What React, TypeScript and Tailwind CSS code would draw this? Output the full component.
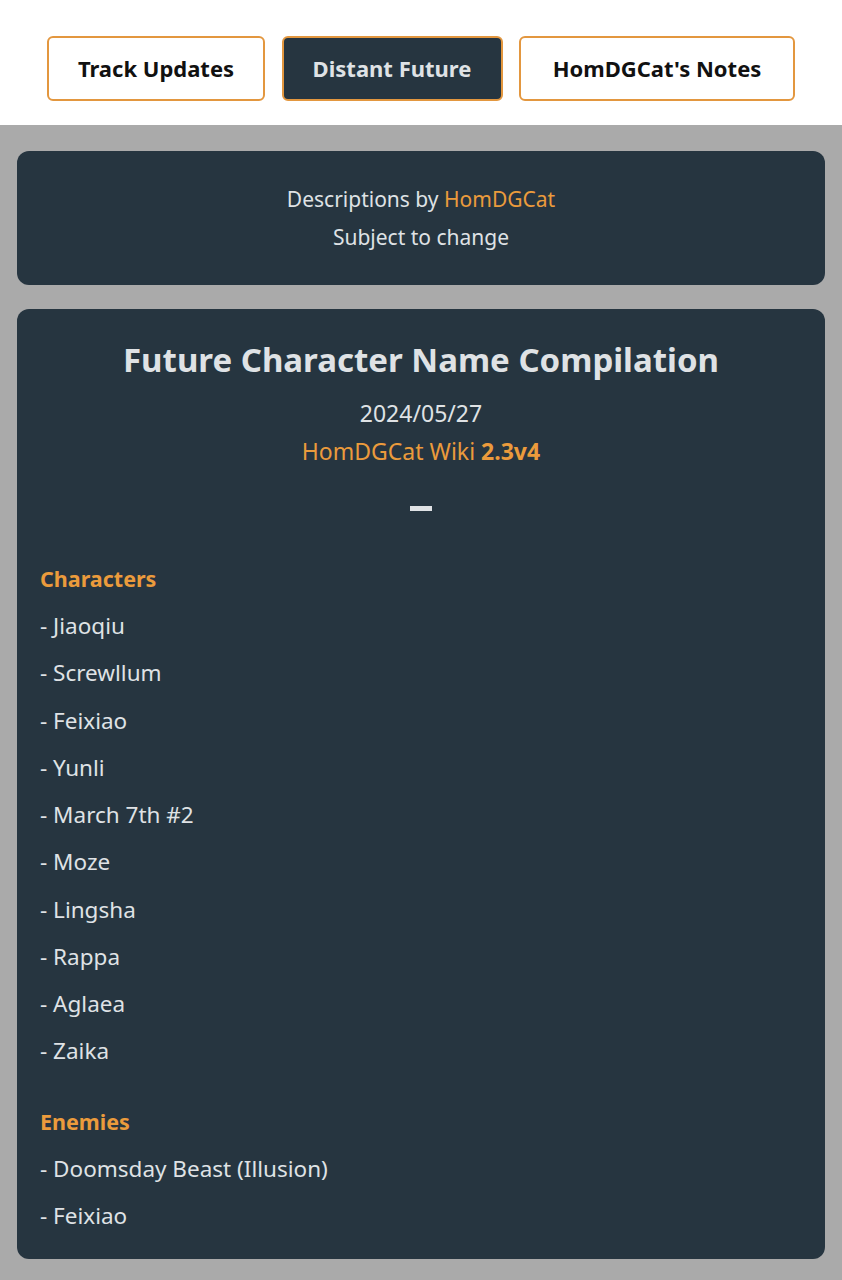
const characters = [
  'Jiaoqiu',
  'Screwllum',
  'Feixiao',
  'Yunli',
  'March 7th #2',
  'Moze',
  'Lingsha',
  'Rappa',
  'Aglaea',
  'Zaika',
];

const enemies = ['Doomsday Beast (Illusion)', 'Feixiao'];

const tabs = [
  { label: 'Track Updates', active: false, width: 'w-[218px]' },
  { label: 'Distant Future', active: true, width: 'w-[221px]' },
  { label: "HomDGCat's Notes", active: false, width: 'w-[276px]' },
];

export default function App() {
  return (
    <div className="min-h-screen bg-[#aaaaaa] font-['Noto_Sans',sans-serif]">
      {/* top tabs */}
      <div className="bg-white h-[125px] flex items-start justify-center gap-[16.5px] pt-[36px]">
        {tabs.map((t) => (
          <button
            key={t.label}
            className={`${t.width} h-[65px] rounded-md border-2 border-[#e3973f] text-[22px] font-bold ${
              t.active ? 'bg-[#263540] text-[#dfe2e5]' : 'bg-white text-[#111]'
            }`}
          >
            {t.label}
          </button>
        ))}
      </div>

      <div className="px-[17px] pt-[26px] pb-[21px] flex flex-col gap-[24px]">
        {/* notice */}
        <div className="bg-[#263540] rounded-xl h-[134px] flex flex-col items-center justify-center text-[21px] text-[#dfe2e5] leading-[38px]">
          <p>
            Descriptions by <span className="text-[#eb9b3c]">HomDGCat</span>
          </p>
          <p>Subject to change</p>
        </div>

        {/* compilation */}
        <div className="bg-[#263540] rounded-xl pt-[27px] pb-[19px] px-[23px] text-[#dfe2e5]">
          <h1 className="text-center text-[33px] font-bold leading-[48px]">
            Future Character Name Compilation
          </h1>
          <p className="text-center text-[23px] leading-[38px] mt-[10px]">2024/05/27</p>
          <p className="text-center text-[23px] leading-[38px] text-[#eb9b3c]">
            HomDGCat Wiki <span className="font-bold">2.3v4</span>
          </p>
          <div className="h-[38px] mt-[19px] flex items-center justify-center">
            <div className="w-[22px] h-[5px] bg-[#dfe2e5]" />
          </div>

          <h2 className="mt-[28px] h-[47px] leading-[47px] text-[21.5px] font-bold text-[#eb9b3c]">
            Characters
          </h2>
          {characters.map((c) => (
            <p key={c} className="h-[47.25px] leading-[47px] text-[22.5px]">
              - {c}
            </p>
          ))}

          <h2 className="mt-[23px] h-[47px] leading-[47px] text-[21.5px] font-bold text-[#eb9b3c]">
            Enemies
          </h2>
          {enemies.map((e) => (
            <p key={e} className="h-[47.5px] leading-[47px] text-[22.5px]">
              - {e}
            </p>
          ))}
        </div>
      </div>
    </div>
  );
}
